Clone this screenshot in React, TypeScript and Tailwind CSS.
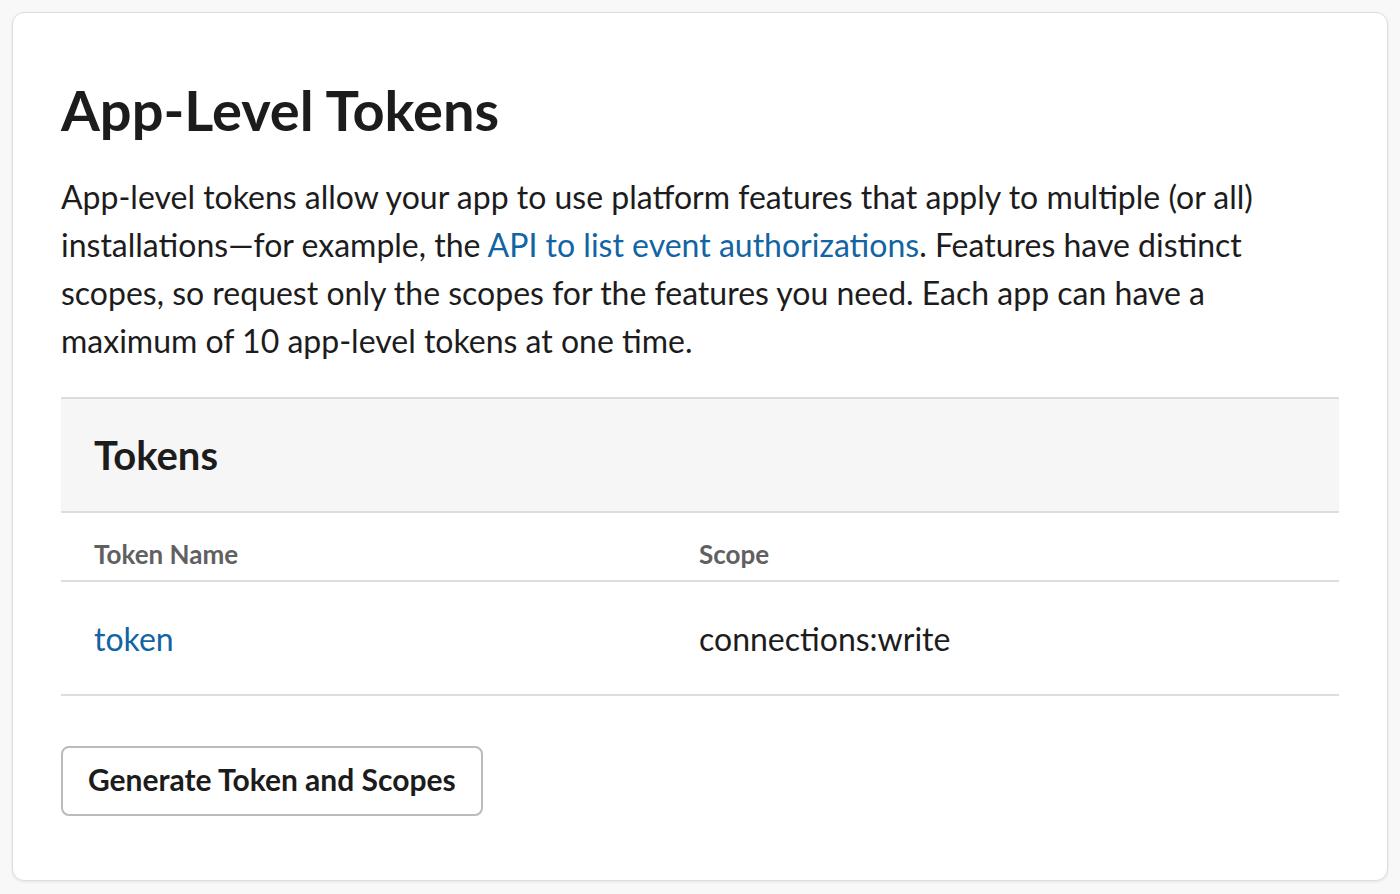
export default function App() {
  return (
    <main
      className="min-h-screen bg-[#f8f8f8] p-3 text-[#1d1c1d]"
      style={{ fontFamily: "Lato, 'Noto Sans', sans-serif" }}
    >
      <div className="rounded-xl border border-[#dddddd] bg-white px-12 pt-[63px] pb-[64px] shadow-[0_1px_3px_rgba(0,0,0,0.08)]">
        <h1 className="text-[56px] font-bold leading-[68px]">App-Level Tokens</h1>
        <p className="mt-[29px] mb-[32px] text-[32px] leading-[48px]">
          App-level tokens allow your app to use platform features that apply to multiple (or all)
          installations—for example, the{" "}
          <a href="#" className="text-[#1264a3]">
            API to list event authorizations
          </a>
          . Features have distinct scopes, so request only the scopes for the features you need. Each
          app can have a maximum of 10 app-level tokens at one time.
        </p>

        {/* Tokens table */}
        <section className="border-t-2 border-[#dddddd]">
          <div className="border-b-2 border-[#dddddd] bg-[#f6f6f6] px-[33px] py-8">
            <h2 className="text-[40px] font-bold leading-[48px]">Tokens</h2>
          </div>
          <div className="grid grid-cols-[638px_1fr] border-b-2 border-[#dddddd] pt-[23px] pb-[8px] text-[26px] font-bold leading-[36px] text-[#616061]">
            <div className="pl-[33px]">Token Name</div>
            <div>Scope</div>
          </div>
          <div className="grid grid-cols-[638px_1fr] border-b-2 border-[#dddddd] pt-[33px] pb-[31px] text-[32px] leading-[48px]">
            <div className="pl-[33px]">
              <a href="#" className="text-[#1264a3]">
                token
              </a>
            </div>
            <div>connections:write</div>
          </div>
        </section>

        <button className="mt-[50px] h-[70px] rounded-lg border-2 border-[#bbbbbb] bg-white px-[25px] pt-[13px] pb-[17px] text-[30px] font-bold leading-[36px] text-[#1d1c1d]">
          Generate Token and Scopes
        </button>
      </div>
    </main>
  );
}
